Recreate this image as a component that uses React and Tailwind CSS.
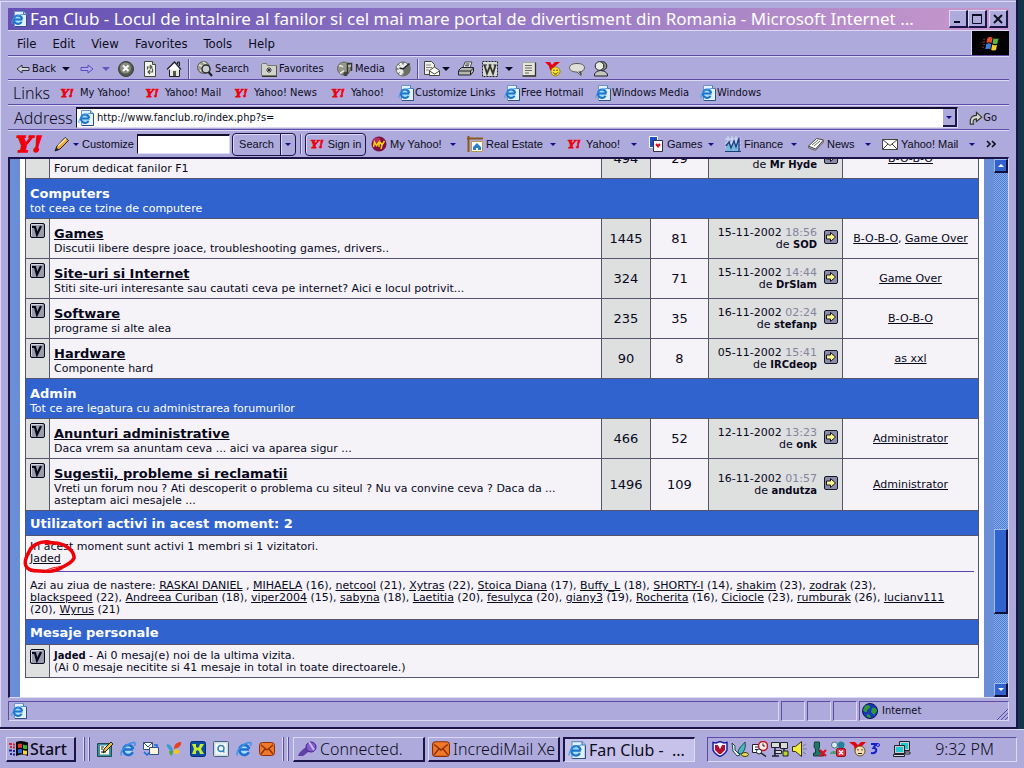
import React from 'react'
import clsx from 'clsx'

//#region data
const menus = ["File", "Edit", "View", "Favorites", "Tools", "Help"];

const categories = [
    {
        rows: [
            { text: "Forum dedicat fanilor F1", posts: 494, threads: 29, user: "Mr Hyde", mods: ["B-O-B-O"] },
        ],
    },
    {
        name: "Computers",
        text: "tot ceea ce tzine de computere",
        rows: [
            { name: "Games", text: "Discutii libere despre joace, troubleshooting games, drivers..", posts: 1445, threads: 81, date: "15-11-2002", time: "18:56", user: "SOD", mods: ["B-O-B-O", "Game Over"] },
            { name: "Site-uri si Internet", text: "Stiti site-uri interesante sau cautati ceva pe internet? Aici e locul potrivit...", posts: 324, threads: 71, date: "15-11-2002", time: "14:44", user: "DrSlam", mods: ["Game Over"] },
            { name: "Software", text: "programe si alte alea", posts: 235, threads: 35, date: "16-11-2002", time: "02:24", user: "stefanp", mods: ["B-O-B-O"] },
            { name: "Hardware", text: "Componente hard", posts: 90, threads: 8, date: "05-11-2002", time: "15:41", user: "IRCdeop", mods: ["as xxl"] },
        ],
    },
    {
        name: "Admin",
        text: "Tot ce are legatura cu administrarea forumurilor",
        rows: [
            { name: "Anunturi administrative", text: "Daca vrem sa anuntam ceva ... aici va aparea sigur ...", posts: 466, threads: 52, date: "12-11-2002", time: "13:23", user: "onk", mods: ["Administrator"] },
            { name: "Sugestii, probleme si reclamatii", text: "Vreti un forum nou ? Ati descoperit o problema cu siteul ? Nu va convine ceva ? Daca da ... asteptam aici mesajele ...", posts: 1496, threads: 109, date: "16-11-2002", time: "01:57", user: "andutza", mods: ["Administrator"] },
        ],
    },
];

const birthdays = [
    ["RASKAI DANIEL", null], ["MIHAELA", 16], ["netcool", 21], ["Xytras", 22], ["Stoica Diana", 17],
    ["Buffy_L", 18], ["SHORTY-I", 14], ["shakim", 23], ["zodrak", 23], ["blackspeed", 22],
    ["Andreea Curiban", 18], ["viper2004", 15], ["sabyna", 18], ["Laetitia", 20], ["fesulyca", 20],
    ["giany3", 19], ["Rocherita", 16], ["Ciciocle", 23], ["rumburak", 26], ["lucianv111", 20], ["Wyrus", 21],
];
//#endregion

//#region icons
const Svg = ({ className = "size-4", box = "0 0 16 16", children }) => (
    <svg className={clsx("shrink-0", className)} viewBox={box} fill="none" aria-hidden="true">{children}</svg>
);

const PageIcon = ({ className }) => (
    <Svg className={className}>
        <path d="M3.500 .5h9l3 3v12h-12z" fill="#e4f0fc" stroke="#6c94c8" />
        <path d="M15.500 4v11.500H4" stroke="#2c5088" />
        <path d="M12.500 .5v3h3" fill="#a8c4ea" stroke="#4a78b8" />
        <circle cx="7" cy="8.500" r="5" fill="#a8dcf8" />
        <path d="M11.300 8.500H3.500M10.600 11A4.200 4.200 0 1 1 11.200 8" stroke="#1c74c8" strokeWidth="2" />
        <path d="M1 13C0 9 5 4 12 3.500" stroke="#3c9ce4" />
    </Svg>
);

const IeIcon = ({ className }) => (
    <Svg className={className}>
        <circle cx="8" cy="8.500" r="4.500" fill="#a8dcf8" />
        <path d="M13 8.500H4M12.800 11.200A5 5 0 1 1 13.200 8" stroke="#1d6fd0" strokeWidth="2.600" />
        <path d="M1.500 14.500C-1 11 7 1.500 14.500 1.500c1.500 1 .5 2.500 0 3.500" stroke="#3c94e4" strokeWidth="1.400" />
    </Svg>
);

const YahooIcon = ({ className = "h-3 w-4" }) => (
    <Svg className={clsx("overflow-visible", className)} box="0 0 32 20">
        <text x="1" y="18" fontFamily="DejaVu Serif, serif" fontWeight="bold" fontStyle="italic" fontSize="23" fill="#f0000c" stroke="#f0000c" strokeWidth="1.500">Y!</text>
    </Svg>
);

const Caret = ({ className = "text-[#0a0a20]" }) => (
    <Svg className={clsx("h-1 w-2", className)} box="0 0 8 4"><path d="M0 0h8L4 4z" fill="currentColor" /></Svg>
);

const SmallCaret = () => (
    <Svg className="h-[3px] w-[6px]" box="0 0 6 3"><path d="M0 0h6L3 3z" fill="#10108a" /></Svg>
);

const BackIcon = () => (
    <Svg className="h-3 w-[14px]" box="0 0 14 12"><path d="M1 6l5-4v2.500h7v3H6V10z" fill="#d4d4dc" stroke="#30303c" /></Svg>
);

const ForwardIcon = () => (
    <Svg className="h-3 w-[14px]" box="0 0 14 12"><path d="M13 6L8 2v2.500H1v3h7V10z" fill="#b4acec" stroke="#5a4ac0" /></Svg>
);

const StopIcon = () => (
    <Svg>
        <circle cx="8" cy="8" r="7.500" fill="#54584c" stroke="#3c3e36" />
        <circle cx="7.500" cy="7" r="5.500" fill="#8a8e80" />
        <path d="M5 4.500l5.500 5.500M10.500 4.500L5 10" stroke="#fff" strokeWidth="2" />
    </Svg>
);

const RefreshIcon = () => (
    <Svg>
        <path d="M2.500 .5h8l3 3v12h-11z" fill="#f4f4f0" stroke="#44463c" />
        <path d="M10.500 .5v3h3" fill="#c8c8c0" stroke="#44463c" />
        <path d="M5.500 8.500V6h4M8 4l2 2-2 2M10.500 7.500V11h-4M8 9l-2 2 2 2" stroke="#55584c" strokeWidth="1.200" />
    </Svg>
);

const HomeIcon = () => (
    <Svg>
        <path d="M3.500 8v7.500h10V8" fill="#e8e8e0" stroke="#20202c" />
        <path d="M1 8.500L8.500 1 15 8.500" fill="#fff" stroke="#20202c" strokeWidth="1.300" />
        <path d="M11.500 3V1h2v4" fill="#888" stroke="#20202c" />
        <path d="M7 15v-5h3v5z" fill="#55584c" />
    </Svg>
);

const SearchIcon = () => (
    <Svg>
        <circle cx="6.500" cy="6.500" r="6" fill="#9da092" stroke="#5c5f54" />
        <path d="M2 4l3 1 1 3-3 2M6 1l3 2" stroke="#e9eadf" strokeWidth="1.500" />
        <circle cx="9" cy="8" r="4" fill="#c8d0d0" stroke="#2c2c30" strokeWidth="1.500" />
        <path d="M11.500 11l3.500 4" stroke="#1c1c20" strokeWidth="2" />
    </Svg>
);

const FavIcon = () => (
    <Svg>
        <path d="M.5 14.500v-11l1-1h4l1 2h9v10z" fill="#d2d3ca" stroke="#77796c" />
        <path d="M8 6v6M5 9h6M6 7l4 4M10 7l-4 4" stroke="#20202c" strokeWidth=".8" />
        <path d="M1 15.500h15V5" stroke="#33342c" />
    </Svg>
);

const MediaIcon = () => (
    <Svg>
        <circle cx="7" cy="7.500" r="6.500" fill="#94978a" stroke="#66695c" />
        <path d="M2 5c2-1 3 0 4 1M3 12c2 0 2-2 4-2" stroke="#eceddf" strokeWidth="1.500" />
        <path d="M10.500 13V2.500h4V10" stroke="#33342c" strokeWidth="1.500" />
        <path d="M11 5h3" stroke="#eceddf" />
        <circle cx="8.500" cy="13" r="2.200" fill="#44463c" />
    </Svg>
);

const HistoryIcon = () => (
    <Svg>
        <circle cx="8" cy="8" r="7" fill="#ebece4" stroke="#66695c" />
        <path d="M8 8l7-5 .5 5A7 7 0 0 1 9 15z" fill="#6c6f62" />
        <path d="M8 8l6.500-5.500M8 8L4.500 7" stroke="#20202c" strokeWidth="1.600" />
        <path d="M8 1.500v2M1.500 8h2M8 14.500v-2M3.500 3.500l1 1M3.500 12.500l1-1" stroke="#20202c" />
    </Svg>
);

const MailToIcon = () => (
    <Svg>
        <path d="M.5 .5h7l3 3v10H.5z" fill="#f0f0ea" stroke="#44463c" />
        <path d="M2 4h5M2 6.500h6M2 9h3" stroke="#88897e" />
        <path d="M5.500 14.500V9.500L10.500 6l5 3.500v5z" fill="#fff" stroke="#44463c" />
        <path d="M5.500 10l5 3 5-3" stroke="#44463c" />
    </Svg>
);

const PrintIcon = () => (
    <Svg>
        <path d="M5 6.500L7 1h7l-2 5.500z" fill="#fff" stroke="#44463c" />
        <path d="M.5 9.500l3-3h12v4l-3 3.500h-12z" fill="#b5b7aa" stroke="#20202c" />
        <path d="M1 10h11.500l3-3M12.500 10v4M7.500 3h4M7 4.800h4" stroke="#20202c" />
    </Svg>
);

const WordIcon = () => (
    <Svg>
        <path d="M.5 .5h15v15H.5z" fill="#d9dad2" stroke="#20202c" strokeDasharray="2 1" />
        <path d="M2.500 4l2.500 8.500L8 5l3 7.500L13.500 4" stroke="#33342c" strokeWidth="1.800" />
        <path d="M1 4h4M6.500 4h3M11.500 4h3" stroke="#20202c" />
    </Svg>
);

const DiscussIcon = () => (
    <Svg>
        <path d="M1.500 1.500h13v13h-13z" fill="#e4e5dc" stroke="#a8a99e" />
        <path d="M14.500 1.500v13.500h-13" stroke="#33342c" strokeWidth="1.300" />
        <path d="M4 4.500h7M4 7h7M4 9.500h7M4 12h4" stroke="#66685c" />
    </Svg>
);

const YmsgIcon = () => (
    <Svg>
        <path d="M0 1h5l2 3 3-3h5L9 6l-1 3H5L4 5z" fill="#e8000c" />
        <circle cx="10.500" cy="10.500" r="4.500" fill="#ffe438" stroke="#8a6a00" strokeWidth=".8" />
        <path d="M9 8.500v1.500M12 8.500v1.500M8.200 11.500c1 2 3.600 2 4.600 0" stroke="#20202c" />
    </Svg>
);

const BubbleIcon = () => (
    <Svg>
        <path d="M8 2.500c5 0 7.500 1.800 7.500 4.200S13 10.500 11 11l1 3.500L8 11C3 11 .5 9 .5 6.700S3 2.500 8 2.500z" fill="#dfe0d8" stroke="#55584c" />
        <path d="M12 10.500l1 3.500-4-3.500" fill="#44463c" />
    </Svg>
);

const PersonIcon = () => (
    <Svg>
        <path d="M1.500 15c-.5-3 2-5 6-5.500C12 10 15 12 14.500 15z" fill="#c5c6bc" stroke="#20202c" />
        <circle cx="9.500" cy="5" r="4.300" fill="#8e9084" stroke="#20202c" />
        <circle cx="6.500" cy="5" r="4.300" fill="#e9eae2" stroke="#20202c" />
    </Svg>
);

const PencilIcon = () => (
    <Svg>
        <path d="M1 15l2-5 8-8.500 3.500 3L6 13z" fill="#f2a93c" stroke="#20202c" />
        <path d="M4 10l8-7.500" stroke="#ffe9a8" strokeWidth="1.500" />
        <path d="M1 15l1.500-3.500L5 14z" fill="#20202c" />
    </Svg>
);

const MyIcon = () => (
    <Svg>
        <circle cx="8" cy="8" r="7.500" fill="#7c1040" />
        <circle cx="6" cy="5.500" r="4" fill="#b03060" />
        <path d="M2.500 11l1-5 2 3.500L8 6v5M9 6l2 3 2.500-4M11 9l-1 4" stroke="#f6d018" strokeWidth="1.500" />
    </Svg>
);

const EstateIcon = () => (
    <Svg>
        <path d="M1.500 0v16M0 2.500h16" stroke="#8a5a18" strokeWidth="2" />
        <path d="M4.500 5.500h11v10h-11z" fill="#fff" stroke="#b89850" />
        <path d="M6 11l4-4 4 4v3h-3v-2H9v2H6z" fill="#2a80c8" />
    </Svg>
);

const CardsIcon = () => (
    <Svg>
        <path d="M1.500 .5h8v11h-8z" fill="#1c50c8" stroke="#fff" />
        <path d="M5.500 4.500h9v11h-9z" fill="#fff" stroke="#30304c" />
        <path d="M10 12L7.500 9c0-2 2-2 2.500-.5.5-1.500 2.500-1.500 2.500.5z" fill="#e01020" />
    </Svg>
);

const FinanceIcon = () => (
    <Svg>
        <path d="M0 3h16M0 7h16M0 11h16M3 0v16M7 0v16M11 0v16" stroke="#cfe6f4" />
        <path d="M1 15V9l3-3 2 4 3-5 2 5 2-7v12z" fill="#7ab8dc" />
        <path d="M1 10l3-4 2 6 3-7 2 6 3-9v14" stroke="#1c3c80" strokeWidth="1.300" />
        <path d="M0 15.500h16" stroke="#1c3c80" />
    </Svg>
);

const NewsIcon = () => (
    <Svg>
        <path d="M.5 10l8-7.500 7 1.500-8 9z" fill="#fff" stroke="#44463c" />
        <path d="M.5 10v2l7 2.500 8-8.500V4M4 9l6-5M6 10l6-5" stroke="#66685c" />
    </Svg>
);

const EnvelopeIcon = () => (
    <Svg>
        <path d="M.5 3.500h15v10H.5z" fill="#fff" stroke="#44463c" />
        <path d="M.5 3.500L8 9.500l7.500-6M.5 13.500L6 8M15.500 13.500L10 8" stroke="#44463c" />
    </Svg>
);

const GoIcon = () => (
    <Svg className="size-[14px]">
        <path d="M1.500 15c-1-7 2-10 7-10V1.500L14.500 7l-6 5V9C5 9 4 11 5 15z" fill="#d8d9d0" stroke="#33342c" strokeWidth="1.300" />
    </Svg>
);

const WindowsFlag = ({ className }) => (
    <Svg className={className}>
        <path d="M5 3c2-1.500 3-1.500 5-.5L9 7.500c-1.500-1-3-1-4.800 0z" fill="#e8502c" />
        <path d="M10.800 3c2 1 3 .6 4.700 0l-1 5c-2 .8-3 .6-4.600-.3z" fill="#58b838" />
        <path d="M4 8.500c2-1 3-1 4.800 0l-1 5c-2-1-3-.8-4.800.2z" fill="#3c7ce0" />
        <path d="M9.600 9c2 1 3 .8 4.600.2l-1 5c-2 .8-3 .4-4.600-.4z" fill="#f4cc28" />
        <path d="M1 4h2M0 6.500h3M1 9h2M0 11.500h2" stroke="#803030" />
    </Svg>
);

const StartFlag = () => (
    <Svg className="h-[18px] w-5" box="0 0 20 18">
        <path d="M7 2c4-2 8-1 12 .5V16c-4-2-8-2-12 0z" fill="#08080c" />
        <path d="M9 4c1.500-.8 2.500-.8 4 0v4c-1.500-.8-2.500-.8-4 0z" fill="#e83820" />
        <path d="M14 4.500c1.500.8 2.500.8 4 .5v4c-1.500.2-2.500 0-4-.6z" fill="#38b828" />
        <path d="M9 9.500c1.500-.8 2.500-.8 4 0v4c-1.500-.8-2.500-.8-4 0z" fill="#2868e8" />
        <path d="M14 10c1.500.8 2.500.8 4 .5v4c-1.500.2-2.500 0-4-.6z" fill="#f8d820" />
        <path d="M0 4h3M4 4.500h2M1 7h2M4 7.500h2" stroke="#d02828" strokeWidth="2" />
        <path d="M0 10.500h3M4 11h2M1 14h2M4 14.500h2" stroke="#1c2890" strokeWidth="2" />
    </Svg>
);

const ForumIcon = () => (
    <Svg className="size-[15px]" box="0 0 15 15">
        <rect x=".5" y=".5" width="14" height="14" rx="1.500" fill="#9a9cae" stroke="#08081c" />
        <path d="M1.500 13V1.500h11" stroke="#d4d5e0" />
        <path d="M2 4h3l2 7.500L11 3" stroke="#08081c" strokeWidth="2.200" />
    </Svg>
);

const LastPostIcon = () => (
    <Svg className="size-[14px]" box="0 0 14 14">
        <rect x=".5" y=".5" width="13" height="13" rx="1.500" fill="#8c8ea6" stroke="#14142c" />
        <path d="M2.500 5h4V2.500L11.500 7l-5 4.500V9h-4z" fill="#fdf68c" stroke="#14142c" />
    </Svg>
);

const GlobeIcon = () => (
    <Svg>
        <circle cx="8" cy="8" r="7.500" fill="#1838b8" stroke="#0c1450" />
        <path d="M3 3c3-2 5-1 5 1S5 6 5 8 2 9 1 7zM10 5c3-1 5 1 5 3l-3 4-3-3zM5 11l3 1 1 3-4-1z" fill="#2c9c38" />
    </Svg>
);

const KeyIcon = () => (
    <Svg className="h-4 w-5" box="0 0 20 16">
        <path d="M1 15c1-4 6-8 9-9l4 4c-4 1-6 4-8 5z" fill="#6040a8" />
        <circle cx="14" cy="6" r="5" fill="#8060c8" stroke="#40208c" />
        <path d="M12 1l5 8" stroke="#c8b4f0" strokeWidth="2" />
    </Svg>
);

const OrangeMailIcon = ({ className }) => (
    <Svg className={className}>
        <rect x=".5" y="1.500" width="15" height="13" rx="3" fill="#f07828" stroke="#8a3008" />
        <path d="M2 4l6 5 6-5M2 13l4-5M14 13l-4-5" stroke="#8a3008" strokeWidth="1.300" />
    </Svg>
);

const DesktopIcon = () => (
    <Svg>
        <path d="M.5 2.500h14v13H.5z" fill="#3c90a0" stroke="#204850" />
        <path d="M3 4.500h9v9H3z" fill="#fffbe0" />
        <path d="M6 12l1-4 7-7 2 2-7 7z" fill="#f0c040" stroke="#20202c" />
        <path d="M4 6h3M4 8h2M4 11h5" stroke="#20202c" />
    </Svg>
);

const SyncMailIcon = () => (
    <Svg>
        <path d="M.5 1.500h9v7h-9z" fill="#fff" stroke="#2c5088" />
        <path d="M.5 1.500L5 6l4.500-4.500" stroke="#2c5088" />
        <path d="M6.500 6.500h9v7h-9z" fill="#fff8d8" stroke="#2c5088" />
        <path d="M1 11l3 3 3-3M11 4h3v3" stroke="#1868d0" strokeWidth="1.500" />
    </Svg>
);

const ButterflyIcon = () => (
    <Svg>
        <path d="M7 12C2 8 0 5 1 3c3 0 5 3 6 6z" fill="#3c9cd0" />
        <path d="M8 8C8 3 11 1 15 1c1 3-2 6-7 7z" fill="#e84020" />
        <path d="M8 9c3-1 5 0 6 1-1 3-4 4-6 2z" fill="#f4c428" />
        <path d="M7 10l-1 5c-2-1-3-3-3-5z" fill="#48a838" />
    </Svg>
);

const KazaaIcon = () => (
    <Svg>
        <rect x=".5" y=".5" width="15" height="15" rx="2" fill="#0c4ca8" stroke="#082c70" />
        <path d="M2 3h4v3c1 1 2 1 3 0l1-3h4l-3 5 3 5h-4l-1-3c-1-1-2-1-3 0v3H2l2-5z" fill="#c8ec28" />
    </Svg>
);

const QuickIcon = () => (
    <Svg>
        <rect x=".5" y=".5" width="15" height="15" rx="1" fill="#d0dce4" stroke="#44647c" />
        <path d="M2.500 2.500h11v11h-11z" fill="#f4f8fa" />
        <circle cx="8" cy="7.500" r="3" stroke="#3484b8" strokeWidth="1.500" />
        <path d="M9.500 9.500l2 2" stroke="#3484b8" strokeWidth="1.500" />
    </Svg>
);

const ShieldIcon = () => (
    <Svg>
        <path d="M1 1.500l3 .5 4-1.500L12 2l3-.5V9c-1 3-4 5-7 6.500C5 14 2 12 1 9z" fill="#f4f0ff" stroke="#1c20a0" strokeWidth="1.500" />
        <path d="M3 4h3l2 4 2-4h3v5l-4 4H7L3 9z" fill="#b01030" />
        <path d="M6 3.500l2 4 2-4z" fill="#fff" />
    </Svg>
);

const SwanIcon = () => (
    <Svg className="h-4 w-[18px]" box="0 0 18 16">
        <path d="M7 12C7 7 12 4 14 1c1 4 0 9-4 12z" fill="#48b8c0" stroke="#20484c" />
        <path d="M1 2l3 3v4l5 5-3 1-4-5z" fill="#e8f4f4" stroke="#20484c" />
        <ellipse cx="14" cy="13.500" rx="3.500" ry="2" fill="#e8dc60" stroke="#44400c" />
    </Svg>
);

const SchedIcon = () => (
    <Svg>
        <path d="M.5 3.500h9v8h-9z" fill="#fff" stroke="#20202c" />
        <circle cx="11" cy="5" r="4.500" fill="#f8e8e8" stroke="#c01820" strokeWidth="1.500" />
        <path d="M11 2.500V5h2M3 6h3M3 8.500h3" stroke="#20202c" />
        <circle cx="7" cy="10.500" r="2.500" fill="#fff" stroke="#20202c" />
        <path d="M9 12l5 3.500" stroke="#20202c" strokeWidth="1.500" />
    </Svg>
);

const NetIcon = () => (
    <Svg className="h-4 w-[18px]" box="0 0 18 16">
        <path d="M.5 1.500h8v5h-8zM9.500 1.500h7v6h-7zM3.500 9.500h7v3h-7z" fill="#dadad8" stroke="#20202c" />
        <path d="M4 7v8M13 8v4M1 15h7" stroke="#20202c" strokeWidth="1.500" />
        <path d="M12 10h5v5h-5z" fill="#b8d820" stroke="#20202c" />
    </Svg>
);

const SpeakerIcon = () => (
    <Svg>
        <path d="M.5 5.500h3L9.500 .5v15l-6-5h-3z" fill="#f4ec40" stroke="#33300c" />
        <path d="M11 5l3-2M11 8h4M11 11l3 2" stroke="#77768c" />
    </Svg>
);

const UserIcon = () => (
    <Svg>
        <path d="M3.500 1h5v5L7.500 9h1v2h4v4h-10v-3h2V8L3 6z" fill="#1c7868" stroke="#20383c" />
        <path d="M9 9l6 6M15 9l-6 6" stroke="#e01020" strokeWidth="2.200" />
    </Svg>
);

const BuddyIcon = () => (
    <Svg>
        <circle cx="4.500" cy="4" r="3" fill="#e0eef4" stroke="#507080" />
        <circle cx="11" cy="4" r="3.500" fill="#24809c" />
        <path d="M0 13c0-4 8-4 9 0z" fill="#48a078" />
        <rect x="6.500" y="7.500" width="9" height="8" rx="1.500" fill="#e83040" stroke="#901020" />
        <path d="M9 9.500l4 4M13 9.500l-4 4" stroke="#fff" strokeWidth="1.500" />
    </Svg>
);

const TrayYahooIcon = () => (
    <Svg className="h-4 w-[18px]" box="0 0 18 16">
        <path d="M0 1h6l3 3 3-3h5l-6 6-2 3H6L5 5z" fill="#e8000c" />
        <circle cx="11" cy="10" r="5" fill="#f4dcb0" stroke="#6a5020" />
        <path d="M9 8v1.500M13 8v1.500M9 12.500h4" stroke="#20202c" />
    </Svg>
);

const ThreeIcon = () => (
    <Svg className="h-4 w-[10px]" box="0 0 10 16">
        <path d="M1 3h5L3.500 7C8 7 7 13 1 12" stroke="#1420d0" strokeWidth="2" />
        <circle cx="8" cy="4" r="1.500" stroke="#1420d0" />
    </Svg>
);

const ComputersIcon = () => (
    <Svg className="h-4 w-[18px]" box="0 0 18 16">
        <path d="M6.500 .5h10v9h-10z" fill="#c8ccd0" stroke="#20202c" />
        <path d="M8 2h7v6H8z" fill="#20c8d0" />
        <path d="M1.500 4.500h10v8h-10z" fill="#c8ccd0" stroke="#20202c" />
        <path d="M3 6h7v5H3z" fill="#20c8d0" />
        <path d="M.5 13.500h11v2H.5zM12 11h5v2h-5z" fill="#d8d8d4" stroke="#20202c" />
    </Svg>
);
//#endregion

//#region browser chrome
const TitleButton = ({ label, children }) => (
    <button type="button" aria-label={label} className="flex h-[18px] w-[19px] items-center justify-center border border-r-2 border-b-2 border-[#dcd8f8] border-r-[#1c1448] border-b-[#1c1448] bg-[#aeaadc] text-[#0c0c20]">
        <svg className="size-3" viewBox="0 0 12 12" fill="none" stroke="currentColor" strokeWidth="2">{children}</svg>
    </button>
);

const TitleBar = () => (
    <header className="flex h-[22px] items-center bg-linear-to-r from-[#6450b4] via-[#9478c4] to-[#c898cc] pr-px pl-[3px]">
        <PageIcon className="size-4" />
        <h1 className="ml-[3px] min-w-0 flex-1 truncate font-[Noto_Sans,sans-serif] text-[17px] leading-[22px] text-white">
            Fan Club - Locul de intalnire al fanilor si cel mai mare portal de divertisment din Romania - Microsoft Internet ...
        </h1>
        <div className="ml-1 flex shrink-0">
            <TitleButton label="Minimize"><path d="M2 9h6" /></TitleButton>
            <TitleButton label="Maximize"><path d="M1.500 1.500h9v9h-9z" strokeWidth="1" /><path d="M1 2h10" /></TitleButton>
            <div className="ml-[2px] flex"><TitleButton label="Close"><path d="M2 2l8 8M10 2l-8 8" /></TitleButton></div>
        </div>
    </header>
);

const MenuBar = () => (
    <nav className="flex h-[26px] items-center border-t border-b border-t-[#dcd8f8] border-b-[#5c4ca4] pl-[9px] text-[13px]">
        <div className="flex flex-1 gap-4 pt-px">
            {menus.map((m) => <button key={m} type="button">{m}</button>)}
        </div>
        <div className="flex h-6 w-[38px] items-center justify-center border-l border-[#dcd8f8] bg-black">
            <WindowsFlag className="size-[17px]" />
        </div>
    </nav>
);

const Tool = ({ className, icon, label, title }) => (
    <button type="button" aria-label={label || title} className={clsx("flex shrink-0 items-center gap-[2px] whitespace-nowrap", className)}>
        {icon}
        {label && <span>{label}</span>}
    </button>
);

const Divider = ({ className }) => (
    <div className={clsx("h-5 shrink-0 border-l border-[#5c4ca4]", className)}>
        <div className="h-full border-l border-[#dcd8f8]" />
    </div>
);

const ToolBar = () => (
    <div className="flex h-6 items-center overflow-hidden border-t border-b border-t-[#dcd8f8] border-b-[#5c4ca4] pt-[2px] pl-2">
        <Tool className="w-[46px]" icon={<BackIcon />} label="Back" />
        <Tool className="w-[18px]" icon={<Caret />} title="Back list" />
        <Tool className="w-[22px]" icon={<ForwardIcon />} title="Forward" />
        <Tool className="w-4" icon={<Caret className="text-[#6454c0]" />} title="Forward list" />
        <Tool className="w-6" icon={<StopIcon />} title="Stop" />
        <Tool className="w-6" icon={<RefreshIcon />} title="Refresh" />
        <Tool className="w-[22px]" icon={<HomeIcon />} title="Home" />
        <Divider className="w-[9px]" />
        <Tool className="w-16" icon={<SearchIcon />} label="Search" />
        <Tool className="w-[76px]" icon={<FavIcon />} label="Favorites" />
        <Tool className="w-[58px]" icon={<MediaIcon />} label="Media" />
        <Tool className="w-[22px]" icon={<HistoryIcon />} title="History" />
        <Divider className="w-[7px]" />
        <Tool className="w-[18px]" icon={<MailToIcon />} title="Mail" />
        <Tool className="w-4" icon={<Caret />} title="Mail list" />
        <Tool className="w-6" icon={<PrintIcon />} title="Print" />
        <Tool className="w-[23px]" icon={<WordIcon />} title="Edit" />
        <Tool className="w-4" icon={<Caret />} title="Edit list" />
        <Tool className="w-6" icon={<DiscussIcon />} title="Discuss" />
        <Tool className="w-6" icon={<YmsgIcon />} title="Yahoo! Messenger" />
        <Tool className="w-6" icon={<BubbleIcon />} title="Chat" />
        <Tool className="w-6" icon={<PersonIcon />} title="Messenger" />
    </div>
);

const QuickLink = ({ className, icon, children }) => (
    <a href="#" className={clsx("flex shrink-0 items-center whitespace-nowrap", className)}>
        {icon}
        <span className="pt-px">{children}</span>
    </a>
);

const LinksBar = () => (
    <nav className="flex h-[25px] items-center overflow-hidden border-t border-b border-t-[#dcd8f8] border-b-[#5c4ca4] pl-[5px]">
        <span className="w-[47px] shrink-0 font-[Noto_Sans,sans-serif] text-[16px] font-light">Links</span>
        <QuickLink className="w-[85px] gap-1" icon={<YahooIcon />}>My Yahoo!</QuickLink>
        <QuickLink className="w-[89px] gap-1" icon={<YahooIcon />}>Yahoo! Mail</QuickLink>
        <QuickLink className="w-[97px] gap-1" icon={<YahooIcon />}>Yahoo! News</QuickLink>
        <QuickLink className="w-[67px] gap-1" icon={<YahooIcon />}>Yahoo!</QuickLink>
        <QuickLink className="w-[106px] gap-px" icon={<PageIcon />}>Customize Links</QuickLink>
        <QuickLink className="w-[91px] gap-px" icon={<PageIcon />}>Free Hotmail</QuickLink>
        <QuickLink className="w-[105px] gap-px" icon={<PageIcon />}>Windows Media</QuickLink>
        <QuickLink className="gap-px" icon={<PageIcon />}>Windows</QuickLink>
    </nav>
);

const AddressBar = () => (
    <form className="flex h-[25px] items-center border-t border-b border-t-[#dcd8f8] border-b-[#5c4ca4] pl-[6px]" onSubmit={(e) => e.preventDefault()}>
        <label htmlFor="address" className="w-[62px] shrink-0 font-[Noto_Sans,sans-serif] text-[16px] font-light">Address</label>
        <div className="flex h-[21px] min-w-0 flex-1 items-center border border-t-2 border-[#14102c] border-r-[#dcd8f8] border-b-[#dcd8f8] bg-white pl-px">
            <PageIcon />
            <input id="address" type="text" defaultValue="http://www.fanclub.ro/index.php?s=" className="ml-[3px] min-w-0 flex-1 outline-none" />
            <button type="button" aria-label="Address list" className="flex h-full w-[14px] items-center justify-center border-r-2 border-b-2 border-[#1c1448] bg-[#aeaadc]">
                <SmallCaret />
            </button>
        </div>
        <button type="submit" className="mr-3 ml-[11px] flex items-center"><GoIcon /><span className="pt-px">Go</span></button>
    </form>
);

const YahooItem = ({ className, icon, label }) => (
    <button type="button" className={clsx("flex shrink-0 items-center pr-[11px] whitespace-nowrap", className)}>
        {icon}
        <span className="ml-[3px] flex-1 text-left">{label}</span>
        <SmallCaret />
    </button>
);

const YahooBar = () => (
    <form className="flex h-[27px] items-center border-t border-[#dcd8f8] pl-[7px] font-[Liberation_Sans,sans-serif]" onSubmit={(e) => e.preventDefault()}>
        <YahooIcon className="h-5 w-8" />
        <button type="button" className="ml-[7px] flex w-[82px] shrink-0 items-center gap-[3px]">
            <PencilIcon />
            <SmallCaret />
            Customize
        </button>
        <input type="text" aria-label="Search the web" className="ml-px h-5 w-[93px] shrink-0 border border-t-2 border-[#14102c] border-r-[#dcd8f8] border-b-[#dcd8f8] bg-white px-1 outline-none" />
        <button type="submit" className="ml-[2px] h-[23px] w-[49px] shrink-0 rounded-l-sm border border-[#1c1448] shadow-[inset_1px_1px_#dcd8f8]">Search</button>
        <button type="button" aria-label="Search options" className="-ml-px flex h-[23px] w-4 shrink-0 items-center justify-center rounded-r-sm border border-[#1c1448] shadow-[inset_1px_1px_#dcd8f8]"><SmallCaret /></button>
        <Divider className="ml-1 w-[5px]" />
        <button type="button" className="flex h-[23px] w-[61px] shrink-0 items-center justify-center gap-[2px] rounded-sm border border-[#1c1448] whitespace-nowrap shadow-[inset_1px_1px_#dcd8f8]">
            <YahooIcon />
            Sign in
        </button>
        <div className="ml-[5px] flex flex-1">
            <YahooItem className="w-24" icon={<MyIcon />} label="My Yahoo!" />
            <YahooItem className="w-[100px]" icon={<EstateIcon />} label="Real Estate" />
            <YahooItem className="w-[81px]" icon={<YahooIcon />} label="Yahoo!" />
            <YahooItem className="w-[77px]" icon={<CardsIcon />} label="Games" />
            <YahooItem className="w-[83px]" icon={<FinanceIcon />} label="Finance" />
            <YahooItem className="w-[74px]" icon={<NewsIcon />} label="News" />
            <YahooItem className="w-[104px]" icon={<EnvelopeIcon />} label="Yahoo! Mail" />
            <button type="button" aria-label="More">
                <Svg className="h-2 w-[10px]" box="0 0 10 8"><path d="M1 1l3 3-3 3M6 1l3 3-3 3" stroke="#0c0c20" strokeWidth="1.600" /></Svg>
            </button>
        </div>
    </form>
);

const ScrollBar = () => (
    <div className="flex w-[14px] shrink-0 flex-col bg-[repeating-conic-gradient(#4a7cd6_0_25%,#8caee8_0_50%)] bg-[length:2px_2px]">
        <button type="button" aria-label="Scroll up" className="flex h-[14px] items-center justify-center border border-r-2 border-b-2 border-[#9cbcf0] border-r-[#10103c] border-b-[#10103c] bg-[#3063cd]">
            <Svg className="h-[3px] w-[6px]" box="0 0 6 3"><path d="M0 3h6L3 0z" fill="#fff" /></Svg>
        </button>
        <div className="grow-[356]" />
        <div className="h-[85px] border border-r-2 border-b-2 border-[#9cbcf0] border-r-[#10103c] border-b-[#10103c] bg-[#3063cd]" />
        <div className="grow-[69]" />
        <button type="button" aria-label="Scroll down" className="flex h-[14px] items-center justify-center border border-r-2 border-b-2 border-[#9cbcf0] border-r-[#10103c] border-b-[#10103c] bg-[#3063cd]">
            <Svg className="h-[3px] w-[6px]" box="0 0 6 3"><path d="M0 0h6L3 3z" fill="#fff" /></Svg>
        </button>
    </div>
);

const Pane = ({ className, children }) => (
    <div className={clsx("flex items-center border border-[#5c4ca4] border-r-[#dcd8f8] border-b-[#dcd8f8]", className)}>{children}</div>
);

const StatusBar = () => (
    <footer className="flex h-5 gap-[2px]">
        <Pane className="flex-1 pl-[2px]"><PageIcon className="size-4" /></Pane>
        <Pane className="w-6" />
        <Pane className="w-6" />
        <Pane className="w-6" />
        <Pane className="w-[150px] justify-between pl-[2px]">
            <span className="flex items-center gap-1"><GlobeIcon /><span className="pt-px">Internet</span></span>
            <Svg className="size-3 self-end" box="0 0 12 12"><path d="M1 12L12 1M5 12l7-7M9 12l3-3" stroke="#5c4ca4" /></Svg>
        </Pane>
    </footer>
);
//#endregion

//#region forum
const UserLink = ({ children }) => <a href="#" className="underline">{children}</a>;

const Heading = ({ title, text }) => (
    <tr className="bg-[#3063cd] text-white">
        <th colSpan={6} className={clsx("border border-[#54546c] px-1 pb-[3px] text-left font-normal", text ? "pt-[6px]" : "pt-1")}>
            <h2 className="text-[13px] leading-[17px] font-bold">{title}</h2>
            {text && <p className="mt-px">{text}</p>}
        </th>
    </tr>
);

const ForumRow = ({ row }) => (
    <tr>
        <td className="border border-[#54546c] bg-[#dedfdf] px-1 pt-1 align-top"><ForumIcon /></td>
        <td className="border border-[#54546c] px-1 pt-[6px] pb-[3px]">
            <h3 className="h-[17px] text-[13px] leading-[17px] font-bold">{row.name && <UserLink>{row.name}</UserLink>}</h3>
            <p className="mt-px max-w-[520px]">{row.text}</p>
        </td>
        <td className="border border-[#54546c] bg-[#dedfdf] text-center text-[13px]">{row.posts}</td>
        <td className="border border-[#54546c] text-center text-[13px]">{row.threads}</td>
        <td className="border border-[#54546c] bg-[#dedfdf] pr-1">
            <div className="flex items-center justify-end gap-[7px] text-right whitespace-nowrap">
                <div>
                    <div className="h-3">{row.date} <span className="text-[#8484a0]">{row.time}</span></div>
                    <div className="h-3">de <b className="text-[10px]">{row.user}</b></div>
                </div>
                <div className="pb-[3px]"><LastPostIcon /></div>
            </div>
        </td>
        <td className="border border-[#54546c] text-center">
            {row.mods.map((m, i) => <React.Fragment key={m}>{i > 0 && ", "}<UserLink>{m}</UserLink></React.Fragment>)}
        </td>
    </tr>
);

const Forum = () => (
    <div className="flex min-w-0 flex-1 flex-col justify-end overflow-hidden border-x-[10px] border-[#6b8fd6] bg-white px-[5px] pb-[19px] font-[DejaVu_Sans,sans-serif] text-[11px] leading-3 text-[#08081c]">
        <table className="w-full table-fixed border-collapse bg-[#f5f3f7]">
            <colgroup>
                <col className="w-6" />
                <col />
                <col className="w-[49px]" />
                <col className="w-[58px]" />
                <col className="w-[134px]" />
                <col className="w-[136px]" />
            </colgroup>
            <tbody>
                {categories.map((c, i) => (
                    <React.Fragment key={i}>
                        {c.name && <Heading title={c.name} text={c.text} />}
                        {c.rows.map((row) => <ForumRow key={row.text} row={row} />)}
                    </React.Fragment>
                ))}
                <Heading title="Utilizatori activi in acest moment: 2" />
                <tr>
                    <td colSpan={6} className="border border-[#54546c] px-1 pt-[5px] pb-[3px]">
                        <p>In acest moment sunt activi 1 membri si 1 vizitatori.</p>
                        <div className="relative w-fit">
                            <UserLink>Jaded</UserLink>
                            <svg className="pointer-events-none absolute -top-3.5 -left-2 h-9 w-[56px]" viewBox="0 0 56 36" fill="none" stroke="#f00008" strokeLinecap="round" aria-hidden="true">
                                <path d="M27 3C17 2 9 7 7 13c-3 5-5 10-3 14 1 4 7 5 14 5 9 1 16 0 21-3 5-3 11-5 13-10 1-6-5-10-10-13C37 4 32 3 25 4" strokeWidth="3.500" />
                                <path d="M22 33c6-5 12-4 18-6" strokeWidth="1" />
                            </svg>
                        </div>
                        <hr className="mt-[6px] mb-2 h-px border-0 bg-[#5a44b4]" />
                        <p className="pr-2">
                            Azi au ziua de nastere:{" "}
                            {birthdays.map(([name, age], i) => (
                                <React.Fragment key={name}>
                                    {name === "blackspeed" && <br />}
                                    <UserLink>{name}</UserLink>{age ? ` (${age})` : " "}{i < birthdays.length - 1 && ", "}
                                </React.Fragment>
                            ))}
                        </p>
                    </td>
                </tr>
                <Heading title="Mesaje personale" />
                <tr>
                    <td className="border border-[#54546c] bg-[#dedfdf] px-1 pt-1 align-top"><ForumIcon /></td>
                    <td colSpan={5} className="border border-[#54546c] px-1 pt-[5px] pb-[3px]">
                        <p><b className="text-[10px]">Jaded</b> - Ai 0 mesaj(e) noi de la ultima vizita.</p>
                        <p>(Ai 0 mesaje necitite si 41 mesaje in total in toate directoarele.)</p>
                    </td>
                </tr>
            </tbody>
        </table>
    </div>
);
//#endregion

//#region taskbar
const TaskButton = ({ icon, active, children }) => (
    <button
        type="button"
        className={clsx(
            "flex h-[25px] w-[132px] shrink-0 items-center gap-[3px] border px-[3px] text-left whitespace-nowrap",
            active
                ? "border-t-2 border-l-2 border-[#dcd8f8] border-t-[#1c1448] border-l-[#1c1448] bg-[#c6c2ea]"
                : "border-r-2 border-b-2 border-[#dcd8f8] border-r-[#1c1448] border-b-[#1c1448] font-light",
        )}
    >
        {icon}
        <span className="min-w-0 flex-1">{children}</span>
    </button>
);

const Grip = () => (
    <div className="flex h-6 shrink-0 gap-[3px]">
        <div className="border-x border-l-[#dcd8f8] border-r-[#5c4ca4]" />
        <div className="border-x border-l-[#dcd8f8] border-r-[#5c4ca4]" />
    </div>
);

const TaskBar = () => (
    <footer className="flex h-[39px] items-center border-t border-[#dcd8f8] bg-[#aeaadc] pr-[7px] pl-[6px] font-[Noto_Sans,sans-serif] text-[16px]">
        <button type="button" className="flex h-[25px] w-[70px] shrink-0 items-center gap-px border border-r-2 border-b-2 border-[#dcd8f8] border-r-[#1c1448] border-b-[#1c1448] pl-[2px] font-medium">
            <StartFlag />
            Start
        </button>
        <div className="ml-[7px] flex items-center">
            <Grip />
            <div className="flex w-[192px] items-center justify-between px-[7px]">
                <DesktopIcon />
                <IeIcon />
                <SyncMailIcon />
                <ButterflyIcon />
                <KazaaIcon />
                <QuickIcon />
                <IeIcon />
                <OrangeMailIcon />
            </div>
            <Grip />
        </div>
        <div className="ml-1 flex flex-1 gap-[3px]">
            <TaskButton icon={<KeyIcon />}>Connected.</TaskButton>
            <TaskButton icon={<OrangeMailIcon className="size-[18px]" />}>IncrediMail Xe</TaskButton>
            <TaskButton active icon={<PageIcon className="size-[18px]" />}>Fan Club - &nbsp;...</TaskButton>
        </div>
        <div className="flex h-[25px] w-[310px] shrink-0 items-center border border-[#5c4ca4] border-r-[#dcd8f8] border-b-[#dcd8f8] pl-1">
            <div className="flex flex-1 items-center gap-[3px]">
                <ShieldIcon />
                <SwanIcon />
                <SchedIcon />
                <NetIcon />
                <SpeakerIcon />
                <UserIcon />
                <BuddyIcon />
                <TrayYahooIcon />
                <ThreeIcon />
            </div>
            <ComputersIcon />
            <time className="mr-[22px] ml-6 font-light">9:32 PM</time>
        </div>
    </footer>
);
//#endregion

const App = () => {
    return (
        <div className="flex h-screen flex-col overflow-hidden bg-[#123648] font-[DejaVu_Sans_Condensed,DejaVu_Sans,sans-serif] text-[11px] text-[#0c0c20]">
            <div className="mr-[6px] flex min-h-0 flex-1 flex-col border-r-2 border-b-2 border-[#1c1448] bg-[#aeaadc] pt-px">
                <div className="flex min-h-0 flex-1 flex-col border-t border-l border-[#dcd8f8] px-[7px] pt-[6px] pb-[6px]">
                    <TitleBar />
                    <MenuBar />
                    <ToolBar />
                    <LinksBar />
                    <AddressBar />
                    <YahooBar />
                    <main className="mb-[3px] flex min-h-0 flex-1 border border-t-2 border-l-2 border-[#dcd8f8] border-t-[#1c1448] border-l-[#1c1448]">
                        <Forum />
                        <ScrollBar />
                    </main>
                    <StatusBar />
                </div>
            </div>
            <TaskBar />
        </div>
    )
}

export default App
